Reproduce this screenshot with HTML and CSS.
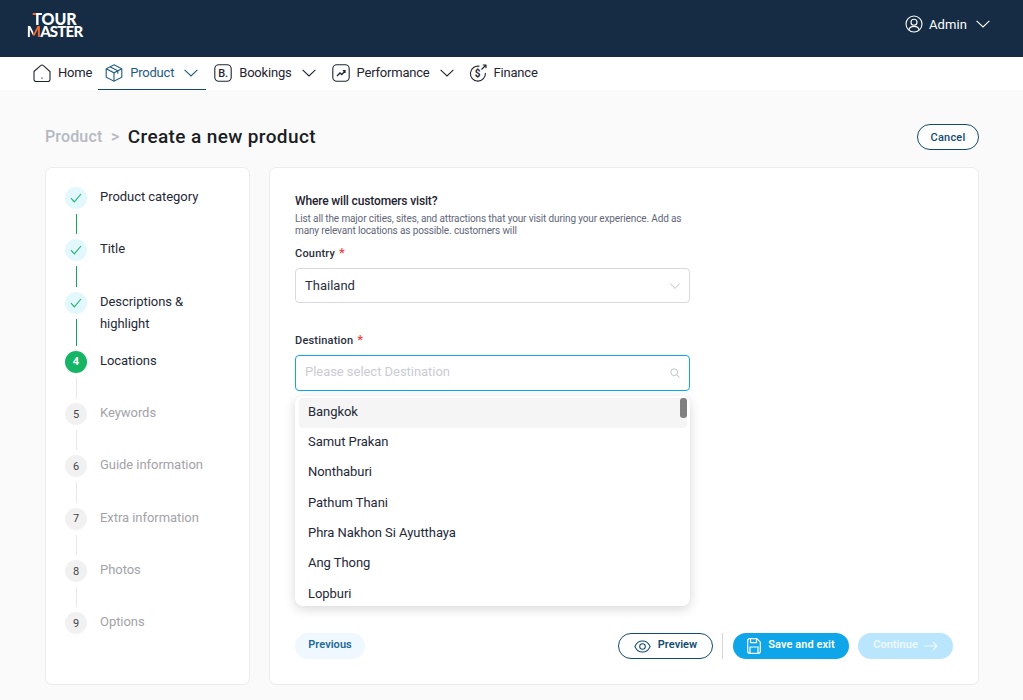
FILE: index.html
```html
<!DOCTYPE html>
<html lang="en">
<head>
<meta charset="utf-8">
<title>Create a new product</title>
<link rel="stylesheet" href="styles.css">
</head>
<body>
<header class="topbar">
  <div class="logo"><span class="logo-top"><span class="logo-t">T</span>OUR</span><span class="logo-bottom"><span class="logo-m">M</span>ASTER</span></div>
  <div class="account">
    <svg class="account-icon" viewBox="0 0 18 18" fill="none" stroke="currentColor" stroke-width="1.1"><circle cx="9" cy="9" r="8"/><circle cx="9" cy="7.2" r="3"/><path d="M3.8 15c.6-2.5 2.6-3.6 5.2-3.6s4.600 1.100 5.200 3.600"/></svg>
    <span class="account-name">Admin</span>
    <svg class="chevron" viewBox="0 0 14 8" fill="none" stroke="currentColor" stroke-width="1.1"><path d="M.6.8 7 7 13.400.8"/></svg>
  </div>
</header>
<nav class="nav">
  <a class="nav-item nav-item-home">
    <svg class="nav-icon" viewBox="0 0 18 18" fill="none" stroke="currentColor" stroke-width="1.1"><path d="M1 7.500 7.600 1.700a2 2 0 0 1 2.800 0L17 7.500v8a2 2 0 0 1-2 2H3a2 2 0 0 1-2-2z"/><path d="M9 13.500v1.200"/></svg>
    <span>Home</span>
  </a>
  <a class="nav-item nav-item-active">
    <svg class="nav-icon" viewBox="0 0 18 18" fill="none" stroke="currentColor" stroke-width="1.1"><path d="M9 .8 16.800 4.800v8.400L9 17.200 1.200 13.200V4.800z"/><path d="M1.200 4.800 9 8.800l7.800-4M9 8.800v8.400M5 2.800l7.800 4v3"/></svg>
    <span>Product</span>
    <svg class="chevron" viewBox="0 0 14 8" fill="none" stroke="currentColor" stroke-width="1.1"><path d="M.6.800 7 7 13.400.8"/></svg>
  </a>
  <a class="nav-item">
    <svg class="nav-icon" viewBox="0 0 18 18" fill="none" stroke="currentColor" stroke-width="1.1"><rect x=".8" y=".8" width="16.400" height="16.400" rx="4"/><text class="icon-letter" x="4.200" y="13.400">B.</text></svg>
    <span>Bookings</span>
    <svg class="chevron" viewBox="0 0 14 8" fill="none" stroke="currentColor" stroke-width="1.1"><path d="M.6.800 7 7 13.400.8"/></svg>
  </a>
  <a class="nav-item">
    <svg class="nav-icon" viewBox="0 0 18 18" fill="none" stroke="currentColor" stroke-width="1.1"><rect x=".8" y=".8" width="16.400" height="16.400" rx="4"/><path d="M5 12l3-3 1.800 1.500L13 7M10.800 6.700H13v2.200" stroke-width="1.300"/></svg>
    <span>Performance</span>
    <svg class="chevron" viewBox="0 0 14 8" fill="none" stroke="currentColor" stroke-width="1.1"><path d="M.6.800 7 7 13.400.8"/></svg>
  </a>
  <a class="nav-item nav-item-finance">
    <svg class="nav-icon" viewBox="0 0 18 18" fill="none" stroke="currentColor" stroke-width="1.1"><path d="M10.500 2.300A7.500 7.500 0 1 0 16.400 9M12.500 5.500 17 1M13.800 1H17v3.200"/><text class="icon-dollar" x="5.800" y="12.600">$</text></svg>
    <span>Finance</span>
  </a>
</nav>
<main class="page">
  <div class="title-row">
    <h1 class="title"><span class="crumb">Product</span><span class="crumb-sep">&gt;</span><span>Create a new product</span></h1>
    <button class="btn-cancel">Cancel</button>
  </div>
  <div class="columns">
    <aside class="panel steps">
      <div class="step done"><div class="rail"><span class="dot"><svg class="check" viewBox="0 0 12 10" fill="none" stroke="currentColor" stroke-width="1.100"><path d="M1 5.200 4.300 8.800 11 1"/></svg></span><span class="line"></span></div><div class="label">Product category</div></div>
      <div class="step done"><div class="rail"><span class="dot"><svg class="check" viewBox="0 0 12 10" fill="none" stroke="currentColor" stroke-width="1.100"><path d="M1 5.200 4.300 8.800 11 1"/></svg></span><span class="line"></span></div><div class="label">Title</div></div>
      <div class="step done"><div class="rail"><span class="dot"><svg class="check" viewBox="0 0 12 10" fill="none" stroke="currentColor" stroke-width="1.100"><path d="M1 5.200 4.300 8.800 11 1"/></svg></span><span class="line"></span></div><div class="label label-wrap">Descriptions &amp; highlight</div></div>
      <div class="step current"><div class="rail"><span class="dot">4</span><span class="line"></span></div><div class="label">Locations</div></div>
      <div class="step"><div class="rail"><span class="dot">5</span><span class="line"></span></div><div class="label">Keywords</div></div>
      <div class="step"><div class="rail"><span class="dot">6</span><span class="line"></span></div><div class="label">Guide information</div></div>
      <div class="step"><div class="rail"><span class="dot">7</span><span class="line"></span></div><div class="label">Extra information</div></div>
      <div class="step"><div class="rail"><span class="dot">8</span><span class="line"></span></div><div class="label">Photos</div></div>
      <div class="step"><div class="rail"><span class="dot">9</span></div><div class="label">Options</div></div>
    </aside>
    <section class="panel form">
      <h2 class="form-title">Where will customers visit?</h2>
      <p class="form-desc">List all the major cities, sites, and attractions that your visit during your experience. Add as many relevant locations as possible. customers will</p>
      <label class="field-label">Country <span class="req">*</span></label>
      <div class="input">
        <span class="input-value">Thailand</span>
        <svg class="input-chevron" viewBox="0 0 10 6" fill="none" stroke="currentColor" stroke-width=".9"><path d="M.5.500 5 5.500 9.500.5"/></svg>
      </div>
      <label class="field-label field-label-dest">Destination <span class="req">*</span></label>
      <div class="select-wrap">
        <div class="input input-focus">
          <span class="input-placeholder">Please select Destination</span>
          <svg class="input-search" viewBox="0 0 10 10" fill="none" stroke="currentColor" stroke-width=".9"><circle cx="4.200" cy="4.200" r="3.400"/><path d="M6.800 6.800 9.600 9.600"/></svg>
        </div>
        <div class="dropdown">
          <div class="option option-active">Bangkok</div>
          <div class="option">Samut Prakan</div>
          <div class="option">Nonthaburi</div>
          <div class="option">Pathum Thani</div>
          <div class="option">Phra Nakhon Si Ayutthaya</div>
          <div class="option">Ang Thong</div>
          <div class="option">Lopburi</div>
          <span class="thumb"></span>
        </div>
      </div>
      <div class="actions">
        <button class="btn btn-prev"><span>Previous</span></button>
        <div class="actions-right">
          <button class="btn btn-preview"><svg class="btn-icon" viewBox="0 0 18 14" fill="none" stroke="currentColor" stroke-width="1.100"><path d="M.8 7C2.500 3 5.500 1 9 1s6.500 2 8.200 6c-1.700 4-4.700 6-8.200 6S2.500 11 .8 7z"/><circle cx="9" cy="7" r="3"/></svg><span>Preview</span></button>
          <span class="divider"></span>
          <button class="btn btn-save"><svg class="btn-icon-save" viewBox="0 0 14 16" fill="none" stroke="currentColor" stroke-width="1.200"><path d="M.7 2.500A1.800 1.800 0 0 1 2.500.7h7.300l3.500 3.500v9.300a1.800 1.800 0 0 1-1.800 1.800h-9A1.800 1.800 0 0 1 .7 13.500z"/><path d="M3.500.7v4h6v-4M3 15.300V9h8v6.300"/></svg><span>Save and exit</span></button>
          <button class="btn btn-continue"><span>Continue</span><svg class="btn-arrow" viewBox="0 0 14 10" fill="none" stroke="currentColor" stroke-width="1.100"><path d="M0 5h13M9 1l4 4-4 4"/></svg></button>
        </div>
      </div>
    </section>
  </div>
</main>
</body>
</html>
```
FILE: styles.css
```css
* { box-sizing: border-box; }
html, body { margin: 0; height: 700px; overflow: hidden; }
body {
  font-family: "Roboto", "Noto Sans", sans-serif;
  font-size: 13px;
  color: #1f2937;
  background: #fafafa;
}
.topbar {
  height: 57px;
  background: #152c44;
  display: flex;
  align-items: center;
  justify-content: space-between;
  padding: 0 33px 0 27px;
  color: #fff;
}
.logo {
  display: flex;
  flex-direction: column;
  align-items: center;
  width: 55px;
  margin-top: -7px;
  font-family: "Lato", sans-serif;
  font-weight: 900;
  color: #fff;
  line-height: 13px;
}
.logo-top { font-size: 16px; letter-spacing: -.1px; }
.logo-bottom { font-size: 15px; letter-spacing: -.8px; }
.logo-t { background: linear-gradient(90deg, #f26a2e 45%, #fff 45%); -webkit-background-clip: text; background-clip: text; color: transparent; }
.logo-m { background: linear-gradient(90deg, #fff 50%, #f26a2e 50%); -webkit-background-clip: text; background-clip: text; color: transparent; }
.account { display: flex; align-items: center; gap: 6px; margin-top: -9px; }
.account-icon { width: 18px; height: 18px; }
.account-name { font-size: 13px; font-weight: 400; letter-spacing: .1px; width: 38px; margin-right: 3px; }
.chevron { width: 14px; height: 8px; flex: none; }
.nav {
  height: 33px;
  background: #fff;
  display: flex;
  padding-left: 26px;
  color: #1f2430;
}
.nav-item { display: flex; align-items: center; gap: 7px; padding: 0 8px 2px; height: 33px; letter-spacing: -.2px; }
.nav-item-home { padding-left: 7px; padding-right: 6px; }
.nav-item-finance { padding-left: 7px; }
.nav-icon { width: 18px; height: 18px; flex: none; }
.nav-item .chevron { margin-left: 3px; }
.nav-item-active { color: #1d5a80; border-bottom: 1px solid #124a70; padding-left: 7px; padding-bottom: 1px; }
.icon-letter { font-size: 11px; font-weight: 500; stroke: none; fill: currentColor; font-family: "Roboto", sans-serif; }
.icon-dollar { font-size: 10px; font-weight: 700; stroke: none; fill: currentColor; font-family: "Roboto", sans-serif; }
.page { padding: 0 44px 0 45px; }
.title-row { height: 77px; display: flex; align-items: center; justify-content: space-between; padding-top: 17px; }
.title { margin: 0; font-size: 19px; font-weight: 500; color: #1a1d24; display: flex; gap: 8.500px; letter-spacing: .38px; line-height: 22px; }
.crumb { color: #b5b9c2; font-size: 16px; line-height: 22px; letter-spacing: .15px; }
.crumb-sep { color: #b5b9c2; font-size: 16px; line-height: 22px; letter-spacing: 0; }
.btn-cancel {
  width: 62px; height: 26px;
  border: 1px solid #124a70;
  border-radius: 13px;
  background: #fff;
  color: #124a70;
  font: 500 11px "Roboto", sans-serif;
  letter-spacing: .2px;
  padding: 0;
}
.columns { display: flex; gap: 19px; height: 518px; }
.panel { background: #fff; border: 1px solid #ececef; border-radius: 7px; }
.steps { width: 205px; padding: 19px 10px 0 19px; }
.step { display: flex; gap: 13px; }
.rail { width: 22px; flex: none; display: flex; flex-direction: column; align-items: center; }
.dot {
  width: 22px; height: 22px;
  border-radius: 50%;
  background: #f1f1f2;
  color: #444;
  display: flex; align-items: center; justify-content: center;
  font-size: 11px;
  flex: none;
}
.line { width: 1px; flex: 1; min-height: 20.350px; margin: 5px 0; background: #e8e8ea; }
.check { width: 12px; height: 10px; color: #19b56b; }
.done .dot { background: #e3f8fd; }
.done .line { background: #1a9e63; }
.current .dot { background: #15b565; color: #fff; font-weight: 700; }
.label { line-height: 22px; color: #a3a3a8; letter-spacing: -.05px; margin-top: -1px; }
.done .label, .current .label { color: #1f2937; }
.label-wrap { width: 105px; padding-bottom: 16px; }
.form { flex: 1; padding: 26px 25px 25px; display: flex; flex-direction: column; }
.form-title { margin: 0 0 5px; font-size: 12px; line-height: 14px; font-weight: 500; color: #1f2430; letter-spacing: -.15px; }
.form-desc { margin: 0 0 10px; width: 395px; font-size: 10px; line-height: 12px; color: #5f6779; letter-spacing: -.13px; }
.field-label { font-size: 11px; line-height: 14px; font-weight: 500; color: #2a2f3c; letter-spacing: .2px; display: block; margin-bottom: 7px; }
.field-label-dest { margin-top: 31px; }
.req { color: #ef4444; font-size: 13px; line-height: 10px; margin-left: 1px; }
.select-wrap { position: relative; width: 395px; }
.input {
  width: 395px; height: 35px;
  border: 1px solid #d9d9dc;
  border-radius: 4px;
  display: flex; align-items: center; justify-content: space-between;
  padding: 0 9px;
  background: #fff;
}
.input-value { color: #2a2f3c; letter-spacing: 0; margin-top: -1px; }
.input-chevron { width: 10px; height: 6px; color: #b9bcc2; }
.input-focus { height: 36px; border-color: #0ea5e9; }
.input-placeholder { color: #c9ccd2; letter-spacing: -.04px; margin-top: -3px; }
.input-search { width: 10px; height: 10px; color: #b9bcc2; }
.dropdown {
  position: absolute;
  left: 0; top: 41px;
  width: 395px; height: 210px;
  background: #fff;
  border-radius: 8px;
  box-shadow: 0 3px 12px rgba(0, 0, 0, .16);
  padding: 1.800px 3px 0 4px;
  overflow: hidden;
}
.option { height: 30.300px; line-height: 27px; padding-left: 9px; color: #1f2937; letter-spacing: -.05px; border-radius: 4px; }
.option-active { background: #f5f5f5; }
.thumb { position: absolute; top: 2px; right: 3px; width: 7px; height: 20px; border-radius: 3px; background: #808080; }
.actions { margin-top: auto; display: flex; justify-content: space-between; align-items: center; }
.actions-right { display: flex; align-items: center; gap: 9px; }
.btn {
  height: 26px;
  border-radius: 13px;
  border: 0;
  padding: 0;
  font: 600 11px "Roboto", sans-serif;
  letter-spacing: .05px;
  display: flex; align-items: center; justify-content: center;
}
.btn span { margin-top: -3px; }
.btn-prev { width: 70px; background: #eff8ff; color: #1d6a99; }
.btn-preview { width: 95px; background: #fff; color: #124a70; border: 1px solid #124a70; gap: 7px; }
.btn-icon { width: 17px; height: 13px; }
.divider { width: 1px; height: 26px; background: #d5d6d9; }
.btn-save { width: 116px; background: #0ea5e9; color: #fff; gap: 7px; margin-left: 1px; }
.btn-icon-save { width: 14px; height: 16px; }
.btn-continue { width: 95px; background: #bae6fd; color: #eef9ff; gap: 6px; }
.btn-arrow { width: 14px; height: 10px; }
```
